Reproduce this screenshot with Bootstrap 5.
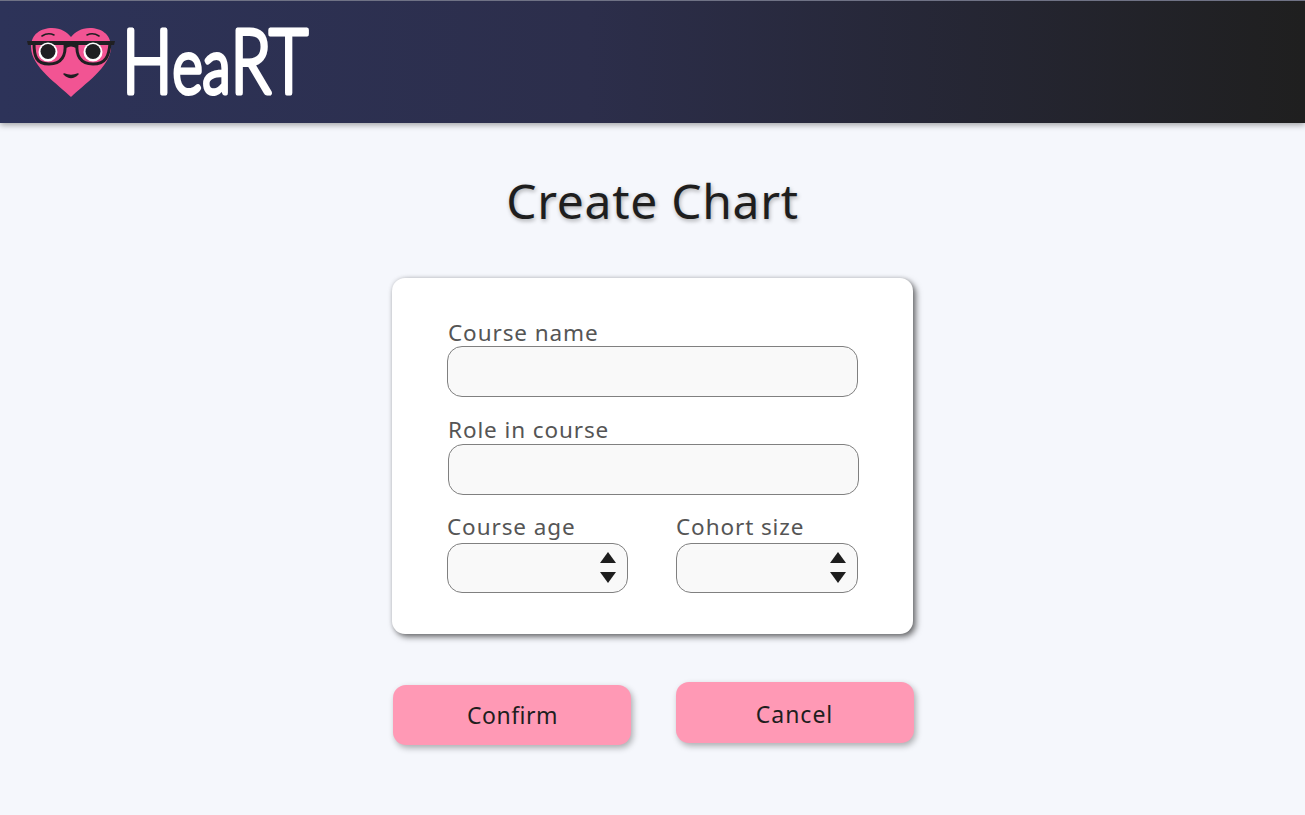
<!DOCTYPE html>
<html lang="en">
<head>
<meta charset="utf-8">
<title>HeaRT - Create Chart</title>
<link href="https://cdn.jsdelivr.net/npm/bootstrap@5.3.0/dist/css/bootstrap.min.css" rel="stylesheet">
<style>
html,body{height:100%}
body{background:#f5f7fc;font-family:"Noto Sans",sans-serif;overflow:hidden;color:#1e1e1e}
.app-head{height:123px;background:linear-gradient(90deg,#2d3359 0%,#2c2e4b 45%,#1f1f1f 100%);border-top:1px solid #6f7285;box-shadow:0 2px 6px rgba(0,0,0,.35);padding-left:26px}
.wordmark-svg{display:block;margin-left:2px}
.wordmark-svg text{font-family:"Lato",sans-serif;font-weight:300;fill:#fff;stroke:#fff;stroke-width:5px;stroke-linejoin:round;stroke-linecap:round}
.page-title{font-size:48px;font-weight:400;line-height:60px;margin:48px 0 47px;text-shadow:1px 2px 4px rgba(0,0,0,.3);color:#1e1e1e;letter-spacing:.7px}
.form-box{width:521px;height:356px;background:#fff;border-radius:13px;box-shadow:3px 3px 6px rgba(0,0,0,.55),0 0 4px rgba(0,0,0,.15);padding:42px 55px 0}
.fld-label{display:block;font-size:22.5px;line-height:26px;color:#555;margin:0 0 0 1px;letter-spacing:.9px}
.fld{display:block;width:100%;height:51px;background:#f9f9f9;border:1px solid #808080;border-radius:15px;padding:0 12px;outline:0}
.second{margin:20px -1px 0 1px}
.second .fld-label{margin:0 0 1px 0}
.pair{margin-top:19px;gap:48px}
.half{width:181px}
.half + .half{width:182px}
.half .fld{height:50px}
.half .fld-label{margin:0 0 3px 0}
.spin{position:relative}
.spin-arrows{position:absolute;right:12px;top:9px;display:flex;flex-direction:column;gap:9px}
.spin-arrows svg{display:block}
.act-row{width:521px;margin-top:48px;margin-left:1px;gap:45px}
.act-btn{width:238px;background:#ff99b5;border:0;border-radius:13px;color:#1e1e1e;font-size:23px;letter-spacing:.5px;box-shadow:2px 3px 6px rgba(0,0,0,.3);padding:0}
.act-btn:hover{background:#ff99b5;color:#1e1e1e}
.act-one{height:60px;margin-top:3px;padding-left:2px}
.act-two{height:61px;padding-top:3px;letter-spacing:1px}
</style>
</head>
<body>
<header class="app-head d-flex align-items-center">
  <svg width="90" height="72" viewBox="0 0 90 72" aria-label="HeaRT logo" role="img">
    <path d="M45 71 C33 59 5 41 5 21 C5 8 15 2 26 2 C35 2 41 6 45 11 C49 6 55 2 64 2 C75 2 85 8 85 21 C85 41 57 59 45 71 Z" fill="#f25493"/>
    <path d="M16 10 Q22 6 28 9 M61 9 Q67 6 73 10" fill="none" stroke="#1f1f22" stroke-width="1.600" stroke-linecap="round"/>
    <path d="M1 15 H89 L88 19 H2 Z" fill="#1f1f22"/>
    <path d="M8 17 C8 30 10 38 23 38 C36 38 40 29 39 18 M51 18 C50 29 54 38 67 38 C80 38 83 30 84 17 M39 21 Q45 17 51 21" fill="none" stroke="#1f1f22" stroke-width="3"/>
    <circle cx="22" cy="26" r="9.500" fill="#fff"/>
    <circle cx="22" cy="25.500" r="7.500" fill="#1f1f22"/>
    <circle cx="67" cy="26" r="9.500" fill="#fff"/>
    <circle cx="67" cy="25.500" r="7.500" fill="#1f1f22"/>
    <path d="M38 48 Q45 55 52 48 Q45 51 38 48 Z" fill="#1f1f22" stroke="#1f1f22" stroke-width="1.500" stroke-linejoin="round"/>
  </svg>
  <svg class="wordmark-svg" width="210" height="110" viewBox="0 0 210 110">
    <text transform="translate(4,86) scale(.76,1)" font-size="88">H<tspan font-size="76">ea</tspan>RT</text>
  </svg>
</header>
<main class="d-flex flex-column align-items-center">
  <h1 class="page-title">Create Chart</h1>
  <form class="form-box">
    <label class="fld-label" for="cname">Course name</label>
    <input class="fld" id="cname" type="text">
    <div class="second">
      <label class="fld-label" for="role">Role in course</label>
      <input class="fld" id="role" type="text">
    </div>
    <div class="pair d-flex">
      <div class="half">
        <label class="fld-label" for="age">Course age</label>
        <div class="spin">
          <input class="fld" id="age" type="text">
          <div class="spin-arrows">
            <svg width="16" height="11" viewBox="0 0 16 11"><path d="M8 0 L16 11 H0 Z" fill="#1e1e1e"/></svg>
            <svg width="16" height="11" viewBox="0 0 16 11"><path d="M0 0 H16 L8 11 Z" fill="#1e1e1e"/></svg>
          </div>
        </div>
      </div>
      <div class="half">
        <label class="fld-label" for="cohort">Cohort size</label>
        <div class="spin">
          <input class="fld" id="cohort" type="text">
          <div class="spin-arrows">
            <svg width="16" height="11" viewBox="0 0 16 11"><path d="M8 0 L16 11 H0 Z" fill="#1e1e1e"/></svg>
            <svg width="16" height="11" viewBox="0 0 16 11"><path d="M0 0 H16 L8 11 Z" fill="#1e1e1e"/></svg>
          </div>
        </div>
      </div>
    </div>
  </form>
  <div class="act-row d-flex align-items-start">
    <button type="button" class="btn act-btn act-one">Confirm</button>
    <button type="button" class="btn act-btn act-two">Cancel</button>
  </div>
</main>
<script src="https://cdn.jsdelivr.net/npm/bootstrap@5.3.0/dist/js/bootstrap.bundle.min.js"></script>
</body>
</html>
